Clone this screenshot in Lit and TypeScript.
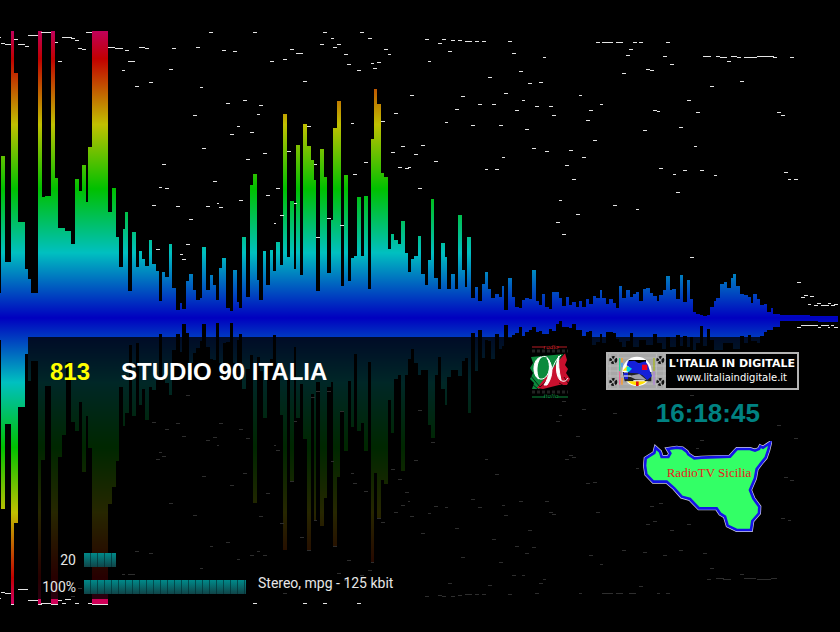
import { LitElement, html, css, svg } from 'lit';
import { customElement, property } from 'lit/decorators.js';

// each entry is "x,y": from x on, the outline of the spectrum stands at y
const UPPER = `0,293 1,156 5,262 11,31 14,73 18,222 25,269 28,279 31,293 38,31 42,197 45,196 51,31 55,178 58,228
65,231 71,244 75,179 79,191 82,165 86,202 88,147 92,31 108,212 112,188 116,237 119,267 123,229 125,212 128,291
132,232 136,267 139,251 142,259 145,266 149,240 152,264 156,271 159,301 162,272 165,277 169,244 172,288 176,310
180,303 182,309 186,281 189,274 193,290 196,300 200,298 202,247 206,290 210,275 213,285 216,300 219,268 222,258
226,308 230,311 233,270 237,302 239,308 242,237 246,297 250,185 253,174 257,280 259,300 263,251 266,285 270,250
273,271 276,242 280,265 283,114 287,257 290,201 294,269 296,145 300,275 303,124 307,146 311,160 314,180 316,291
320,149 324,177 327,273 331,220 333,128 337,101 341,286 344,175 348,281 351,258 354,256 357,197 361,256 364,196
368,289 371,139 374,89 377,104 381,173 384,177 388,249 391,234 394,240 398,244 401,221 405,253 408,272 411,259
414,256 418,236 421,274 425,285 428,260 431,199 434,278 438,289 441,243 445,257 447,289 451,274 455,289 458,215
462,270 465,287 467,237 471,298 475,287 478,301 482,284 485,272 488,289 491,298 495,294 499,297 502,286 504,310
508,278 512,297 515,307 519,308 522,300 525,298 529,299 532,270 536,301 539,305 542,294 545,307 549,309 552,292
559,298 562,306 566,297 569,305 572,302 576,307 579,301 582,307 586,299 589,304 593,296 596,298 600,290 602,298
606,304 609,299 613,303 616,308 619,286 622,298 626,290 630,297 633,294 636,292 639,301 643,289 646,288 650,293
653,296 657,301 659,295 663,290 666,276 670,290 672,289 676,299 680,275 683,302 687,280 690,299 693,312 696,314
700,315 703,316 707,315 710,307 714,301 716,298 720,284 724,282 727,288 731,278 733,274 736,286 740,294 744,295
748,297 751,303 753,294 757,299 760,305 764,304 767,312 771,308 773,314 780,315 810,316`;

const LOWER = `0,340 1,509 5,424 11,604 14,523 18,407 25,354 28,381 31,361 38,604 41,460 45,386 51,604 58,457
62,435 66,362 71,422 75,431 79,402 82,472 86,416 88,448 92,604 108,504 112,487 116,461 119,387 123,426 125,413
129,345 132,416 136,343 139,405 142,389 145,420 149,387 152,390 156,380 159,334 162,377 165,383 169,395 172,350
176,334 180,352 182,324 186,333 189,363 193,353 196,348 200,341 202,324 206,347 210,359 213,360 216,323 219,363
223,343 226,342 230,323 233,363 237,340 239,334 242,389 246,369 250,355 253,503 257,357 260,371 263,418 267,363
270,359 273,335 276,365 280,415 283,550 287,379 290,481 294,347 296,418 300,384 303,439 307,550 311,394 314,521
316,382 320,526 324,498 327,387 331,382 333,547 337,477 340,412 344,451 348,381 351,427 354,354 357,431 361,423
364,451 368,362 371,562 374,473 377,519 381,480 384,484 388,400 391,433 394,379 398,375 401,471 405,375 408,359
411,349 414,363 418,375 421,370 428,425 431,438 435,375 438,357 441,389 445,405 447,377 451,370 458,376 462,361
465,358 468,413 471,333 475,371 478,330 482,358 485,340 488,341 491,359 495,334 499,349 502,346 504,325 508,338
512,335 515,333 519,327 522,336 525,332 529,330 532,327 536,332 539,331 542,334 549,329 552,331 556,324 559,321
562,327 569,328 572,324 576,330 582,336 586,332 589,331 592,345 596,342 600,334 602,343 606,332 613,333 616,339
619,342 622,347 626,341 630,333 633,347 639,340 646,345 653,334 657,343 662,349 666,337 670,347 676,335 680,346
683,336 687,347 690,337 693,350 696,343 700,326 703,346 707,329 710,340 714,350 723,343 733,349 740,336 744,343
748,335 751,341 757,343 760,336 764,332 767,330 773,327 780,321 818,322`;

// peak markers, "x,y,width"
const PEAKS = `0,37,1 1,43,4 5,44,6 14,39,4 18,44,7 25,46,4 28,35,10 41,32,10 55,42,3 62,37,10 71,38,4 75,40,4
78,48,4 82,49,4 86,32,6 58,61,4 108,47,7 115,48,8 125,50,4 128,61,7 122,70,3 139,47,6 145,48,4 172,48,4 196,47,4
169,69,4 149,82,4 135,86,4 200,87,3 193,115,4 202,148,4 162,164,4 159,187,3 165,188,4 152,205,4 176,206,4
189,219,4 206,206,4 156,249,4 186,244,4 180,254,3 182,259,4 209,32,4 253,32,4 222,50,4 233,51,4 290,49,4 296,53,7
283,59,4 270,61,4 323,32,4 331,38,3 320,44,4 333,47,4 337,44,4 360,32,4 368,38,4 344,54,4 347,64,4 357,70,4
371,63,3 377,62,4 373,68,4 384,49,4 388,54,3 303,81,4 410,95,4 226,103,4 243,100,4 259,105,4 257,114,3 237,126,3
230,134,4 250,132,4 246,159,4 263,153,4 307,126,4 287,151,4 314,164,3 351,123,3 381,121,4 394,113,4 391,152,4
401,146,4 414,154,4 398,167,4 405,168,4 408,167,3 364,162,4 353,174,4 213,181,4 217,203,2 219,207,4 239,200,4
266,195,4 276,188,4 280,215,4 274,223,2 294,203,3 327,218,4 316,237,4 340,225,4 418,188,4 425,39,4 438,43,4
442,39,4 448,51,4 451,40,4 458,40,4 465,41,7 475,41,4 482,41,4 508,41,4 512,53,4 428,61,3 543,57,3 519,71,4
488,77,4 528,83,4 539,82,4 504,93,4 522,100,3 461,96,4 478,104,4 492,104,4 455,109,4 515,110,4 535,106,4 549,106,4
552,115,4 445,122,3 471,125,4 499,125,4 525,129,4 579,95,3 589,110,4 600,104,3 586,120,4 593,140,4 421,145,4
434,161,4 532,148,4 545,151,4 569,150,4 582,157,4 502,157,3 485,169,3 495,169,4 565,165,4 572,179,4 559,200,3
576,214,4 556,222,4 562,234,4 613,205,4 596,42,4 602,42,11 616,42,7 622,73,4 626,55,4 629,49,4 633,42,4 639,42,4
666,42,4 663,56,4 670,64,4 646,69,4 650,70,4 703,56,8 716,56,4 720,57,7 731,56,6 737,57,4 727,61,4 744,57,13
757,56,17 773,57,4 790,57,4 740,81,4 710,86,4 687,100,4 653,110,4 657,111,3 696,112,4 643,130,4 679,127,4
694,146,3 777,112,4 781,115,4 659,168,4 673,174,3 683,170,4 700,170,4 714,175,3 676,192,4 636,209,3 784,172,4
788,179,3 794,179,4 690,257,4 797,282,4 801,297,4 804,295,4 810,296,4 808,304,3 814,305,4 817,303,4 821,305,8
828,303,3 831,305,4 834,304,4 797,327,4 801,325,17 818,327,3 821,325,8 828,327,2 831,325,3 834,327,4
0,598,1 1,592,4 5,593,6 18,589,10 28,600,10 41,603,10 11,604,3 38,604,4 51,604,7 92,604,16 58,600,4 62,603,4
75,603,4 88,603,4 65,599,6 71,596,4 78,588,4 122,574,3 128,574,7 135,551,4 149,553,4 200,568,3 193,515,4
169,503,4 202,476,4 156,459,4 159,452,3 162,456,4 152,422,4 165,429,4 176,423,4 186,395,4 182,436,4 206,440,4
219,423,4 213,437,4 217,445,2 239,429,4 246,438,4 274,445,2 276,450,4 243,473,4 230,485,4 266,493,4 259,516,4
280,523,4 210,546,3 226,542,4 237,559,3 250,555,4 257,551,3 263,555,4 300,537,4 307,550,4 314,520,3 333,546,4
290,481,4 311,397,4 316,391,4 294,421,3 327,391,4 340,411,4 331,461,3 351,473,3 353,483,4 364,491,4 371,562,3
368,570,4 347,560,4 337,573,4 344,580,4 360,575,4 377,518,4 381,522,4 391,469,4 394,512,4 398,479,4 401,505,4
405,492,4 408,501,2 410,516,4 414,460,4 418,410,4 283,593,4 253,603,4 303,603,4 323,603,4 357,603,4 431,442,4
485,459,3 495,474,4 562,401,4 582,409,4 559,415,3 556,421,4 613,413,4 576,436,4 569,455,4 572,457,4 565,459,4
586,483,4 593,482,4 471,499,4 519,501,4 545,501,4 434,506,4 445,507,3 478,507,4 502,505,3 549,512,4 552,514,4
428,513,3 504,515,4 596,512,4 421,533,4 455,528,4 528,530,4 492,539,4 515,546,4 532,547,4 525,553,4 461,557,4
499,562,4 589,555,4 600,564,3 622,550,4 512,575,4 522,575,3 448,583,4 488,585,4 539,583,4 543,579,3 425,596,4
438,595,4 442,596,4 451,596,4 458,595,4 465,594,7 475,594,4 482,594,4 508,594,4 535,593,4 579,593,3 602,593,11
616,593,7 629,593,7 657,593,3 666,593,4 639,586,4 707,579,4 716,578,8 723,579,8 744,578,12 757,579,14 771,578,6
740,574,4 710,568,4 643,552,4 663,555,4 679,550,4 703,553,4 670,530,4 646,524,4 653,521,4 650,506,4 659,503,4
687,524,4 636,468,3 690,395,4 777,425,4 794,438,4 700,440,4 696,448,3 784,477,4 790,480,4 781,518,4 788,520,3`;

const AXIS = 318;
const END = 838;

function rows(data: string): number[][] {
  return data.trim().split(/\s+/).map((entry) => entry.split(',').map(Number));
}

function outline(data: string): string {
  const steps = rows(data).map(([x, y]) => `H${x}V${y}`).join('');
  return `M0 ${AXIS}${steps}H${END}V${AXIS}Z`;
}

function dashes(data: string): string {
  return rows(data).map(([x, y, w]) => `M${x} ${y}h${w}v1h-${w}z`).join('');
}

@customElement('spectrum-view')
export class SpectrumView extends LitElement {
  static styles = css`
    :host {
      display: block;
    }

    .canvas {
      display: block;
      width: 100%;
      height: 100%;
    }

    .sharp {
      shape-rendering: crispEdges;
    }
  `;

  render(){
    return html`
      <svg class="canvas" viewBox="0 0 840 632" preserveAspectRatio="none" aria-hidden="true">
        <defs>
          <linearGradient id="heat" gradientUnits="userSpaceOnUse" x1="0" y1="0" x2="0" y2="632">
            <stop offset="4.9%" stop-color="#c0005a"></stop>
            <stop offset="9.3%" stop-color="#c00000"></stop>
            <stop offset="19.7%" stop-color="#c0c000"></stop>
            <stop offset="29.9%" stop-color="#00c000"></stop>
            <stop offset="40%" stop-color="#00c0c0"></stop>
            <stop offset="50.3%" stop-color="#0000c0"></stop>
            <stop offset="60.5%" stop-color="#00c0c0"></stop>
            <stop offset="70.8%" stop-color="#00c000"></stop>
            <stop offset="81.1%" stop-color="#c0c000"></stop>
            <stop offset="91.4%" stop-color="#c00000"></stop>
            <stop offset="95%" stop-color="#d00058"></stop>
          </linearGradient>
        </defs>
        ${svg`
          <path class="sharp" fill="url(#heat)" d=${outline(UPPER)}></path>
          <path class="sharp" fill="url(#heat)" d=${outline(LOWER)}></path>
          <path class="sharp" fill="#e4e4e4" d=${dashes(PEAKS)}></path>
        `}
      </svg>
    `;
  }
}

@customElement('level-meter')
export class LevelMeter extends LitElement {
  @property()
  label = "";

  @property({ type: Number })
  value = 0;

  static styles = css`
    :host {
      display: flex;
      align-items: center;
      gap: 8px;
      height: 22px;
    }

    .label {
      width: 34px;
      text-align: right;
    }

    .track {
      width: 162px;
      height: 14px;
    }

    .fill {
      height: 100%;
      background:
        repeating-linear-gradient(90deg, transparent 0 6px, rgba(0, 40, 44, 0.6) 6px 7px),
        linear-gradient(#008a8a, #104448);
    }
  `;

  render(){
    return html`
      <span class="label" id="label">${this.label}</span>
      <div class="track" role="meter" aria-labelledby="label" aria-valuenow=${this.value}>
        <div class="fill" style="width:${this.value}%"></div>
      </div>
    `;
  }
}

@customElement('app-root')
export class AppRoot extends LitElement {
  static styles = css`
    :host {
      display: block;
      background: #000;
      color: #fff;
      font-family: "Liberation Sans", Arial, sans-serif;
    }

    .screen {
      position: relative;
      box-sizing: border-box;
      display: flex;
      flex-direction: column;
      justify-content: flex-end;
      min-height: 100vh;
      padding: 0 0 33px 28px;
    }

    .backdrop {
      position: absolute;
      inset: 0;
    }

    .panel {
      position: relative;
      box-sizing: border-box;
      display: grid;
      grid-template-columns: 1fr auto auto;
      gap: 35px;
      min-height: 262px;
      padding-right: 41px;
      background: rgba(0, 0, 0, 0.8);
    }

    .main {
      display: flex;
      flex-direction: column;
      justify-content: space-between;
      padding: 21px 0 1px;
    }

    .channel {
      display: flex;
      gap: 31px;
      margin: 0;
      padding-left: 22px;
      font-size: 24px;
      line-height: 28px;
      font-weight: bold;
      white-space: nowrap;
    }

    .number {
      color: #ff0;
    }

    .levels {
      display: flex;
      align-items: flex-end;
      gap: 12px;
      padding-left: 14px;
      color: #e6e6e6;
      font-family: Roboto, "Liberation Sans", sans-serif;
      font-size: 14px;
      line-height: 16px;
    }

    .meters {
      display: grid;
      gap: 5px;
    }

    .format {
      padding-bottom: 7px;
      white-space: nowrap;
    }

    .station {
      display: block;
      padding-top: 6px;
    }

    .side {
      display: flex;
      flex-direction: column;
      padding-top: 15px;
    }

    .banner {
      display: flex;
      align-items: center;
      gap: 3px;
      box-sizing: border-box;
      height: 38px;
      padding-right: 2px;
      border: 2px solid #b4b4b4;
      background: #000;
      color: #fff;
      font-family: "DejaVu Sans", Verdana, sans-serif;
      text-align: center;
      text-decoration: none;
      white-space: nowrap;
    }

    .name {
      display: block;
      font-size: 11px;
      line-height: 14px;
      font-weight: bold;
    }

    .address {
      display: block;
      font-size: 10px;
      line-height: 14px;
    }

    .region {
      display: flex;
      flex-direction: column;
      align-items: center;
      gap: 13px;
      padding: 8px 0 0 11px;
    }

    .clock {
      color: #008282;
      font-size: 26px;
      line-height: 30px;
      font-weight: bold;
    }

    .island {
      display: block;
    }
  `;

  stationLogo(){
    return html`
      <svg class="station" width="42" height="56" viewBox="0 0 42 56" role="img" aria-label="Radio Studio 90 Italia">
        <path d="M3 4h13M28 4h10" stroke="#b81c24"></path>
        <text x="22" y="6" fill="#d02028" font-family="Liberation Serif" font-style="italic" font-size="7" text-anchor="middle">radio</text>
        <path d="M3 8h36" stroke="#222" stroke-width="3" stroke-dasharray="3 2"></path>
        <path d="M2 14L36 11L34 17L10 46H3L5 40L1 36L4 30L1 25L4 20Z" fill="#0c8a3c"></path>
        <path d="M36 10L38 17L36 22L39 26L37 30L41 36L38 42L30 42L14 46L8 45Z" fill="#c8102e"></path>
        <path d="M3 41l6 5M1 32l10 12M32 14l4-4M27 20l8-9M11 44l9-8M30 40l7 4M35 34l4 6" stroke="#000" stroke-width="1" opacity=".7"></path>
        <path d="M21 20C19 12 14 12 10 16C4 22 5 34 11 36C17 37 21 30 21 20" fill="none" stroke="#fff" stroke-width="1"></path>
        <path d="M12 14C3 16 3 33 10 36C7 30 7 20 12 14Z" fill="#fff" stroke="#fff"></path>
        <path d="M18 15C22 20 21 34 15 42L18 42C24 34 25 22 18 15Z" fill="#fff" stroke="#fff"></path>
        <path d="M32 12C26 16 23 27 17 41" fill="none" stroke="#fff"></path>
        <path d="M30 13C26 22 27 37 33 38C36 39 38 37 39 35" fill="none" stroke="#fff"></path>
        <path d="M30 13C26 22 27 32 32 37C30 28 29 21 30 13Z" fill="#fff" stroke="#fff"></path>
        <path d="M3 49h36" stroke="#222" stroke-width="3" stroke-dasharray="3 2"></path>
        <path d="M3 54h13M29 54h10" stroke="#0c8a3c"></path>
        <text x="22" y="55" fill="#109a48" font-family="Liberation Serif" font-style="italic" font-size="7" text-anchor="middle">italia</text>
      </svg>
    `;
  }

  testCard(){
    return html`
      <svg width="58" height="34" viewBox="0 0 174 102" aria-hidden="true">
        <rect width="174" height="102" fill="#a8a8a8"></rect>
        <path d="M0 12h174M0 36h174M0 51h174M0 66h174M0 90h174M30 0v102M145 0v102M6 0v102M168 0v102" stroke="#c4c4c4" stroke-width="2"></path>
        <g fill="none" stroke="#111" stroke-width="8" stroke-dasharray="7 4">
          <circle cx="16" cy="18" r="8"></circle>
          <circle cx="16" cy="84" r="8"></circle>
          <circle cx="157" cy="18" r="8"></circle>
          <circle cx="157" cy="84" r="8"></circle>
        </g>
        <path d="M35 12v40" stroke="#20d890" stroke-width="4"></path>
        <path d="M35 52v40" stroke="#f06898" stroke-width="4"></path>
        <path d="M42 12v14M42 72v20" stroke="#f0a040" stroke-width="5"></path>
        <path d="M42 26v14" stroke="#50a0f0" stroke-width="5"></path>
        <path d="M138 12v40" stroke="#a8b820" stroke-width="4"></path>
        <path d="M138 52v40" stroke="#b080d8" stroke-width="4"></path>
        <circle cx="87" cy="52" r="44" fill="#fff"></circle>
        <path d="M62 18h52v10H62z" fill="#000"></path>
        <path d="M44 50L60 32V50Z" fill="#ffe800"></path>
        <path d="M56 38h20v16H56z" fill="#00d8e8"></path>
        <path d="M44 54h86v28H50z" fill="#222"></path>
        <path d="M60 22L80 20L92 28L112 22L120 34L126 52L132 66L118 78L104 64L88 58L60 56L72 44L56 34Z" fill="#1420d8"></path>
        <path d="M46 56h14v20H50z" fill="#1420d8"></path>
        <path d="M62 66L94 60L116 78L82 76Z" fill="#a0a0a8"></path>
        <path d="M102 32h16v16h-16z" fill="#f00020"></path>
        <path d="M58 82Q87 106 116 82Z" fill="#ffe000"></path>
        <path d="M84 82h8v14h-8z" fill="#e01010"></path>
        <path d="M48 54h12M48 66h20M76 80h34" stroke="#fff" stroke-width="3"></path>
      </svg>
    `;
  }

  island(){
    return html`
      <svg class="island" width="129" height="93" viewBox="24 18 387 279" role="img" aria-label="RadioTV Sicilia">
        <defs>
          <path id="coast" d="M62 38L75 50L80 66L100 66L106 55L98 42L125 38L142 40L155 50L160 58L178 70L200 68L285 65L300 48L306 42L345 42L360 47L372 42L376 34L384 38L396 30L405 24L400 45L392 68L378 85L365 102L360 130L345 165L355 190L373 215L372 235L352 258L348 285L305 285L278 272L270 245L256 236L245 220L192 220L165 192L140 185L118 160L95 140L55 140L34 118L30 92L32 70L58 54Z"></path>
        </defs>
        <use href="#coast" fill="none" stroke="#d0d0e0" stroke-width="12"></use>
        <use href="#coast" fill="#33ff66" stroke="#1414e6" stroke-width="8"></use>
        <text x="222" y="126" fill="#e8201c" font-family="Liberation Serif, Times New Roman, serif" font-size="39" text-anchor="middle">RadioTV Sicilia</text>
      </svg>
    `;
  }

  render(){
    return html`
      <div class="screen">
        <spectrum-view class="backdrop"></spectrum-view>
        <main class="panel">
          <div class="main">
            <h1 class="channel"><span class="number">813</span><span>STUDIO 90 ITALIA</span></h1>
            <div class="levels">
              <div class="meters">
                <level-meter label="20" value="20"></level-meter>
                <level-meter label="100%" value="100"></level-meter>
              </div>
              <span class="format">Stereo, mpg - 125 kbit</span>
            </div>
          </div>
          ${this.stationLogo()}
          <div class="side">
            <a class="banner" href="#">
              ${this.testCard()}
              <span>
                <span class="name">L'ITALIA IN DIGITALE</span>
                <span class="address">www.litaliaindigitale.it</span>
              </span>
            </a>
            <div class="region">
              <time class="clock">16:18:45</time>
              ${this.island()}
            </div>
          </div>
        </main>
      </div>
    `;
  }
}
